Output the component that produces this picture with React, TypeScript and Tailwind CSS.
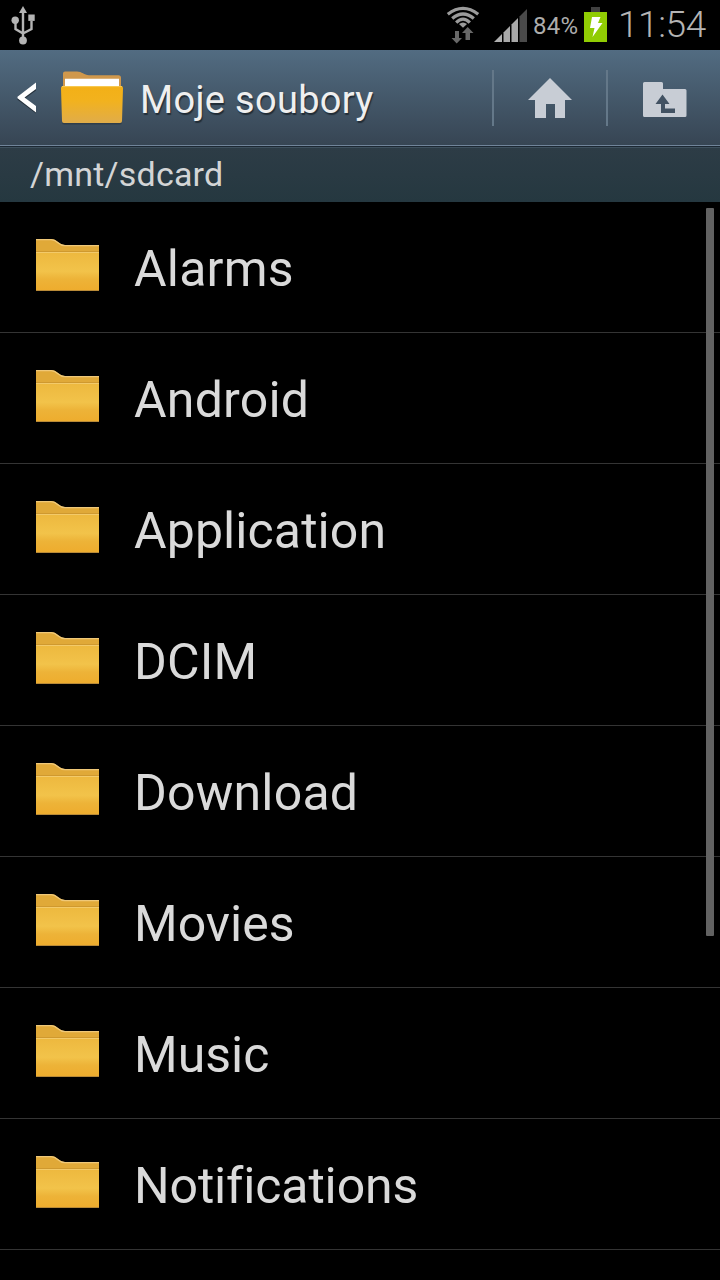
import { ReactNode } from 'react'

interface Folder {
  name: string
  tracking: string
}

const folders: Folder[] = [
  { name: 'Alarms', tracking: 'tracking-[0.2px]' },
  { name: 'Android', tracking: 'tracking-[0.2px]' },
  { name: 'Application', tracking: 'tracking-[0.1px]' },
  { name: 'DCIM', tracking: 'tracking-[0.2px]' },
  { name: 'Download', tracking: 'tracking-[0.2px]' },
  { name: 'Movies', tracking: 'tracking-normal' },
  { name: 'Music', tracking: 'tracking-normal' },
  { name: 'Notifications', tracking: 'tracking-[-0.15px]' }
]

function UsbIcon() {
  return (
    <svg width="26" height="40" viewBox="0 0 26 40" fill="#b4b4b4">
      <path d="M13 1l4 7H9z" />
      <path d="M13 6v30M13 28.5L5.500 24v-8M13 28.5l8.500-4.500v-8" fill="none" stroke="#b4b4b4" strokeWidth="2.400" />
      <circle cx="5.200" cy="15.300" r="3.700" />
      <rect x="18.300" y="9.500" width="6.400" height="6.400" />
      <circle cx="13" cy="35.500" r="3.900" />
    </svg>
  )
}

function WifiIcon() {
  return (
    <svg width="34" height="38" viewBox="0 0 34 38">
      <g fill="none" stroke="#9b9b9b" strokeWidth="3.300">
        <path d="M1.800 8.200Q17 -3.400 32.200 8.200" />
        <path d="M6.200 12.600Q17 3.400 27.800 12.600" />
        <path d="M10.200 16.600Q17 9.800 23.800 16.600" />
      </g>
      <path d="M17 21.800l-4-3.800q4-3 8 0z" fill="#9b9b9b" />
      <path d="M9 25h4v7h3l-5.300 5.500L5.500 32H9z" fill="#686868" />
      <path d="M21.700 21l5.800 6H24v7h-4.500v-7H16z" fill="#686868" />
    </svg>
  )
}

function SignalIcon() {
  return (
    <svg width="33" height="33" viewBox="0 0 33 33">
      <path d="M0 33l8-8v8z" fill="#b0b0b0" />
      <path d="M9.500 23.500L16 17v16H9.500z" fill="#a8a8a8" />
      <path d="M17.500 15.500L24 9v24h-6.500z" fill="#a8a8a8" />
      <path d="M25.500 7.500L33 0v33h-7.500z" fill="#4a4a4a" />
    </svg>
  )
}

function BatteryIcon() {
  return (
    <svg width="23" height="35" viewBox="0 0 23 35">
      <path d="M7 0h9v5H7z" fill="#414141" />
      <path d="M0 5h23v30H0z" fill="#90cc03" />
      <path d="M8 10h8.500L14 16h4.500L8.500 30l2-9H6z" fill="#fff" />
    </svg>
  )
}

function MyFilesIcon() {
  return (
    <svg width="64" height="56" viewBox="0 0 64 56">
      <defs>
        <linearGradient id="front" x1="0" y1="0" x2="0" y2="1">
          <stop offset="0" stopColor="#f3b016" />
          <stop offset="0.4" stopColor="#f2b21e" />
          <stop offset="1" stopColor="#e0ac4a" />
        </linearGradient>
      </defs>
      <path d="M2 52.500q0 2 2 2h56q2 0 2-2z" fill="#26323d" opacity=".6" />
      <path d="M3 18V3.500Q3 1.500 5 1.500h12c5 0 7 3.700 12 3.700h29.500q2.500 0 2.500 2.500V18z" fill="#d0984c" />
      <path d="M5 8.800h54V18H5z" fill="#fff" />
      <path d="M1 18q0-2 2-2h58q2 0 2 2l-1 33q0 2-2 2H4q-2 0-2-2z" fill="url(#front)" />
      <path d="M2 16.600h60" stroke="#f8ca55" strokeWidth="1" />
    </svg>
  )
}

function FolderIcon() {
  return (
    <svg width="63" height="53" viewBox="0 0 63 53" className="shrink-0">
      <defs>
        <linearGradient id="folder" x1="0" y1="0" x2="0" y2="1">
          <stop offset="0" stopColor="#edb83e" />
          <stop offset="0.5" stopColor="#f2c34a" />
          <stop offset="0.7" stopColor="#edb338" />
          <stop offset="1" stopColor="#eeac2d" />
        </linearGradient>
      </defs>
      <path d="M0 0h15c7 0 7 6 14 6h34v8H0z" fill="#e0a938" />
      <path d="M0 .7h15c7 0 7 6 14 6h34" fill="none" stroke="#efc878" strokeWidth="1.300" />
      <path d="M0 12.500h63V52H0z" fill="url(#folder)" />
      <path d="M0 12.500h63" stroke="#cf992f" strokeWidth="1" />
      <path d="M0 13.500h63" stroke="#f3ca69" strokeWidth="1" />
      <path d="M0 51.500h63" stroke="#b98a37" strokeWidth="1" />
    </svg>
  )
}

function HeaderButton({ children }: { children: ReactNode }) {
  return (
    <button className="flex h-14 w-[114px] items-center justify-center border-l-2 border-[#647889]">
      {children}
    </button>
  )
}

export default function App() {
  return (
    <div className="relative flex h-[1280px] w-[720px] flex-col overflow-hidden bg-black font-['Roboto','Noto_Sans',sans-serif]">
      {/* Status bar */}
      <div className="flex h-[50px] shrink-0 items-start pl-[10px]">
        <div className="pt-[5px]"><UsbIcon /></div>
        <div className="ml-auto flex items-start pr-[14px]">
          <div className="pt-[6px]"><WifiIcon /></div>
          <div className="ml-[14px] pt-[9px]"><SignalIcon /></div>
          <span className="ml-[6px] w-[51px] pt-[10px] text-2xl leading-8 tracking-[0.3px] whitespace-nowrap text-[#adadad]">84%</span>
          <div className="pt-[7px]"><BatteryIcon /></div>
          <span className="ml-[11px] w-[88px] pt-[5px] text-[37px] leading-10 font-light tracking-[-0.4px] whitespace-nowrap text-[#b4b4b4]">11:54</span>
        </div>
      </div>

      {/* Action bar */}
      <header className="flex h-[98px] shrink-0 flex-col bg-linear-to-b from-[#526c82] to-[#364452]">
        <div className="flex h-[95px] items-center">
          <svg width="20" height="32" viewBox="0 0 20 32" className="ml-[17px]">
            <path d="M19 2v6.500L8 16.500l11 8.500v6.500L.5 17.800v-1.500z" fill="#26323d" />
            <path d="M19 .5V7L7.500 15.500 19 24v6.500L.5 16.200v-1.500z" fill="#fff" />
          </svg>
          <div className="ml-[23px]"><MyFilesIcon /></div>
          <h1 className="ml-[16px] pt-[5px] text-[38px] tracking-[0.3px] text-[#efefef] [text-shadow:1px_2px_1px_#222d37]">Moje soubory</h1>
          <div className="ml-auto flex">
            <HeaderButton>
              <svg width="44" height="40" viewBox="0 0 44 40">
                <path d="M22 0l22 22h-7v18H27V26h-9v14H7V22H0z" fill="#c8cdd5" />
              </svg>
            </HeaderButton>
            <HeaderButton>
              <svg width="44" height="36" viewBox="0 0 44 36" className="mt-[4px] ml-[2px]">
                <path d="M1.500 0h17q1.500 0 1.500 1.500V7h22q1.500 0 1.500 1.500v25q0 1.500-1.500 1.500H1.500Q0 35 0 33.500v-32Q0 0 1.500 0z" fill="#c8cdd5" />
                <path d="M19.500 12.500l7 9.500H22v4.500h10V31H18v-9h-5.500z" fill="#425263" />
              </svg>
            </HeaderButton>
          </div>
        </div>
        <div className="h-px bg-[#71859a]" />
        <div className="h-px bg-[#1c2833]" />
        <div className="h-px bg-[#3e505d]" />
      </header>

      {/* Current path */}
      <div className="flex h-[54px] shrink-0 items-center bg-linear-to-b from-[#2d3c46] to-[#253840] pb-[2px] pl-[30px] text-[34px] tracking-[0.2px] text-[#d3d5d6]">
        /mnt/sdcard
      </div>

      <ul className="shrink-0">
        {folders.map((folder) => (
          <li key={folder.name} className="flex h-[131px] items-center border-b border-[#343434] pl-[36px]">
            <div className="pb-[4px]"><FolderIcon /></div>
            <span className={`ml-[35px] pt-[4px] text-[50px] leading-none whitespace-nowrap text-[#dadada] ${folder.tracking}`}>
              {folder.name}
            </span>
          </li>
        ))}
      </ul>

      {/* Scrollbar */}
      <div className="absolute top-[208px] right-[6px] h-[728px] w-2 rounded-[1px] bg-[#626262]" />
    </div>
  )
}
